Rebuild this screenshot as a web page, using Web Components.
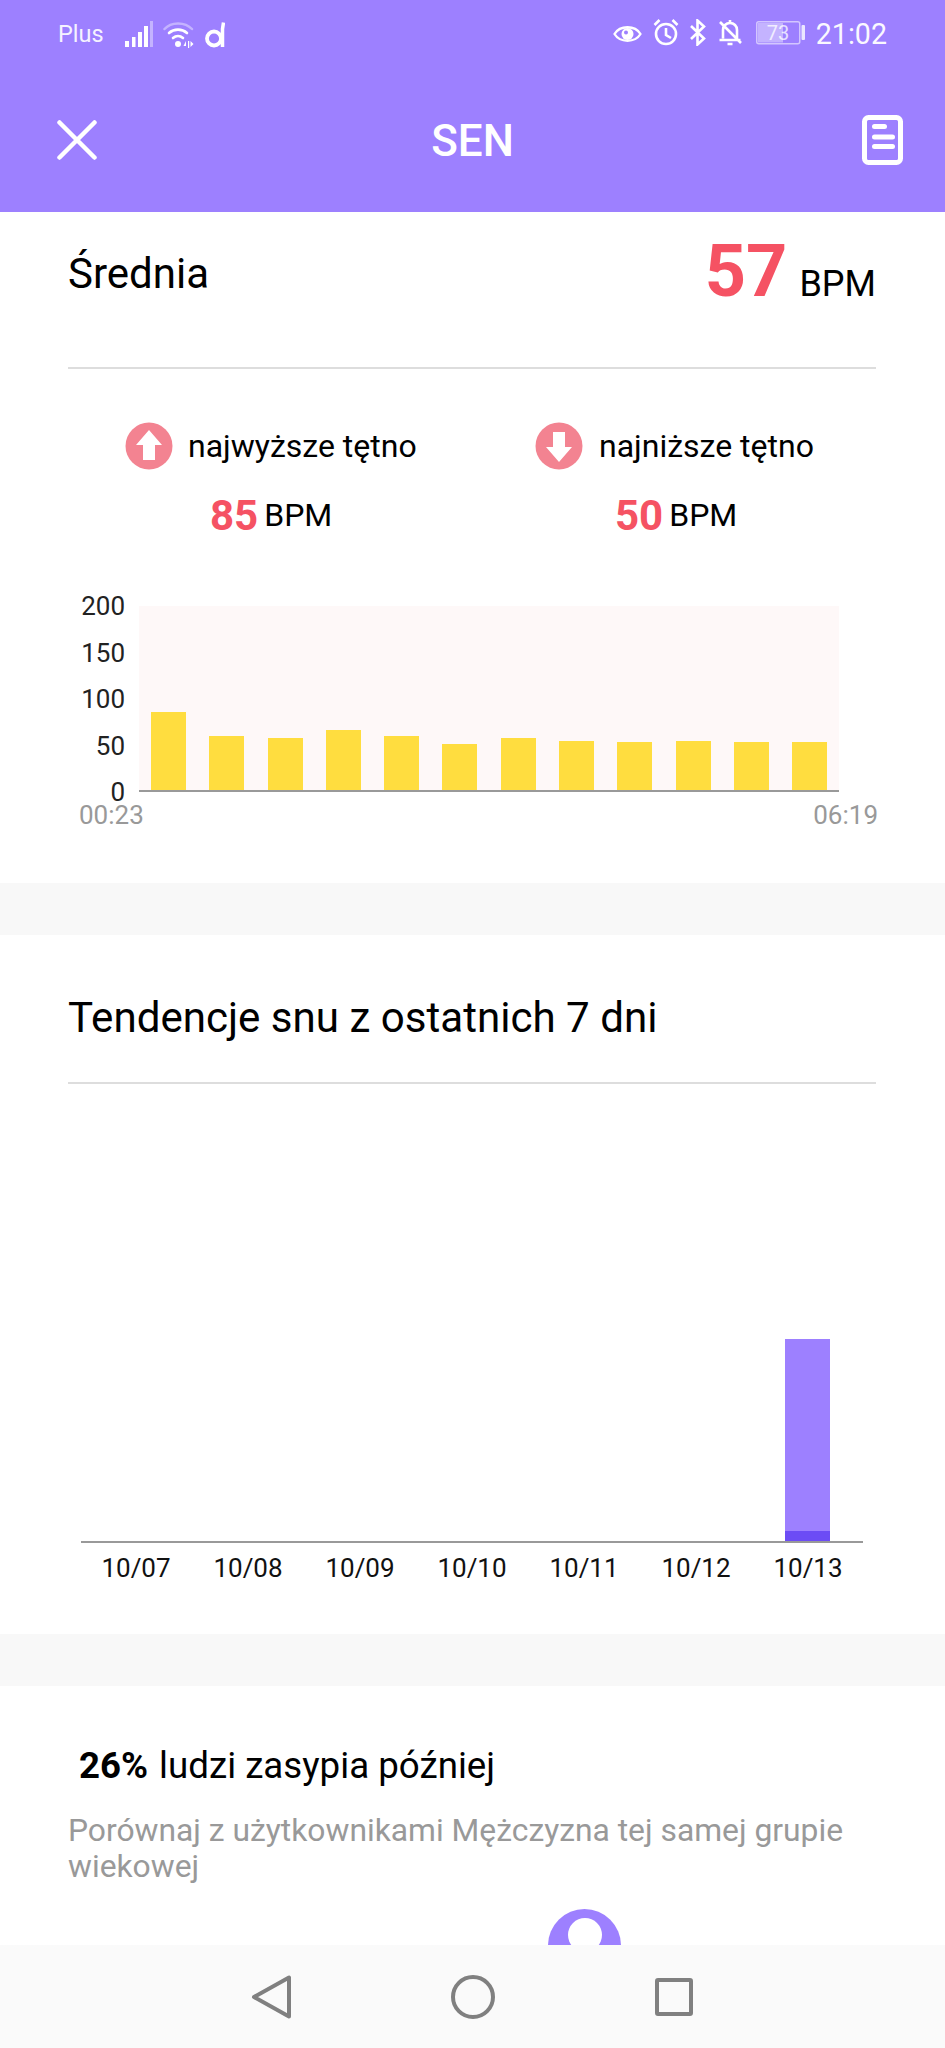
<!DOCTYPE html>
<html>
<head>
<meta charset="utf-8">
<title>SEN</title>
<style>
html, body { margin: 0; padding: 0; }
body { width: 945px; height: 2048px; overflow: hidden; background: #fff; font-family: Roboto, "Liberation Sans", sans-serif; color: #000; display: flex; flex-direction: column; }
main { flex: 1; min-height: 0; overflow: hidden; }
</style>
</head>
<body>
<sleep-header></sleep-header>
<main>
  <heart-card></heart-card>
  <trend-card></trend-card>
  <rank-card></rank-card>
</main>
<nav-bar></nav-bar>

<script>
function shadow(el, html) {
  el.attachShadow({ mode: "open" }).innerHTML = html;
}

class SleepHeader extends HTMLElement {
  connectedCallback() {
    shadow(this, `
<style>
:host { display: block; height: 212px; background: #9d80ff; color: #fff; flex: none; }
.status { display: flex; align-items: center; height: 68px; padding: 0 58px; box-sizing: border-box; }
.plus { font-size: 23.5px; opacity: .9; margin-right: 21px; }
.left { display: flex; align-items: center; gap: 10.5px; }
.right { margin-left: auto; display: flex; align-items: center; gap: 10.5px; }
.time { font-size: 28.6px; opacity: .95; }
svg { display: block; }
.bar { display: grid; grid-template-columns: 1fr auto 1fr; align-items: center; height: 144px; padding: 0 42px; box-sizing: border-box; }
.bar svg:first-child { margin-left: 15px; }
.bar svg:last-child { justify-self: end; }
h1 { margin: 0; padding-top: 2px; font-size: 44px; font-weight: 500; line-height: 1; }
</style>
<div class="status">
  <span class="plus">Plus</span>
  <div class="left">
    <svg width="28" height="27" viewBox="0 0 28 27"><g fill="#fff"><rect x="0" y="20" width="4" height="6"/><rect x="7" y="16" width="3.5" height="10"/><rect x="13" y="11" width="4" height="15"/><rect x="19" y="5" width="4" height="21"/></g><rect x="25" y="0" width="3" height="26" fill="#fff" opacity=".4"/></svg>
    <svg width="31" height="27" viewBox="0 0 31 27" fill="none" stroke="#fff" stroke-linecap="round"><path d="M1.5 8C8 0.5 22 0.5 29 8" stroke-width="2.5" opacity=".4"/><path d="M6 12C11 7.500 19 7.500 24 12" stroke-width="2.600"/><path d="M10 17C13 14.500 17 14.500 20 17" stroke-width="2.600"/><circle cx="15" cy="23" r="3" fill="#fff" stroke="none"/><path d="M23 20l-2.500 5h2.500zM25 20v7h1.200v-7zM27.500 20v6l3-3z" fill="#fff" stroke="none"/></svg>
    <svg width="20" height="27" viewBox="0 0 20 27" fill="none" stroke="#fff" style="margin-left:.5px"><circle cx="9" cy="17.500" r="7" stroke-width="3.800"/><path d="M17.500 26V8L18.500 1.500" stroke-width="3.500"/></svg>
  </div>
  <div class="right">
    <svg width="29" height="20" viewBox="0 0 29 20" fill="none" stroke="#fff"><path d="M1.500 10C7 1 22 1 27.500 10C22 19 7 19 1.500 10Z" stroke-width="2.300"/><circle cx="14.500" cy="10" r="6" fill="#fff" stroke="none"/><circle cx="13" cy="8.500" r="2" fill="#9d80ff" stroke="none"/></svg>
    <svg width="26" height="27" viewBox="0 0 26 27" fill="none" stroke="#fff" stroke-width="2.600" style="margin-top:-4px"><circle cx="13" cy="15" r="10"/><path d="M13 9v7l5 3M1.500 6l5-5M24.500 6l-5-5"/></svg>
    <svg width="18" height="27" viewBox="0 0 18 27" fill="none" stroke="#fff" stroke-width="2.600" style="margin-top:-3px"><path d="M2 7l13 12.500-6.500 6V1.500l6.500 6L2 20"/></svg>
    <svg width="24" height="27" viewBox="0 0 24 27" fill="none" stroke="#fff" stroke-width="2.600" style="margin-top:-3px"><path d="M5 19.500V11C5 7 8 4 12 4s7 3 7 7l0 8.500M1.500 21h21M9.500 25h5M12 1v3M2 3l21 21"/></svg>
    <svg width="49" height="24" viewBox="0 0 49 24" style="margin:-3px 0 0 4px"><rect x=".75" y=".75" width="43" height="22" rx="2" fill="none" stroke="#fff" stroke-width="1.500" opacity=".55"/><rect x="2" y="2" width="25" height="19.500" fill="#fff" opacity=".4"/><rect x="45.500" y="4" width="3.500" height="15" rx="1" fill="#fff" opacity=".8"/><text x="22" y="19" font-size="20" text-anchor="middle" fill="#fff" opacity=".75" font-family="Roboto">73</text></svg>
    <span class="time">21:02</span>
  </div>
</div>
<div class="bar">
  <svg width="40" height="40" viewBox="0 0 40 40"><path d="M2.500 2.500L37.500 37.500M37.500 2.500L2.500 37.500" stroke="#fff" stroke-width="4.500" stroke-linecap="round"/></svg>
  <h1>SEN</h1>
  <svg width="41" height="50" viewBox="0 0 41 50" fill="none"><rect x="2.500" y="2.500" width="36" height="45" rx="4" stroke="#fff" stroke-width="5"/><path d="M12.500 11.500h10M12.500 22h18M12.500 31.500h18" stroke="#fff" stroke-width="5" stroke-linecap="round"/></svg>
</div>`);
  }
}

class HeartCard extends HTMLElement {
  connectedCallback() {
    const values = [85, 59, 57, 65, 59, 50, 57, 53, 52, 53, 52, 52];
    shadow(this, `
<style>
:host { display: block; background: #fff; height: 723px; box-sizing: border-box; padding: 0 69px 0 68px; border-bottom: 52px solid #f8f8f8; }
.top { display: flex; justify-content: space-between; align-items: flex-start; height: 157px; box-sizing: border-box; border-bottom: 2px solid #ddd; }
.label { font-size: 42px; line-height: 50px; margin-top: 37px; }
.avg { margin-top: 24px; }
.big { font-size: 72px; font-weight: 700; color: #f55263; line-height: 1; }
.unit { font-size: 36px; margin-left: 12px; }
.minmax { display: grid; grid-template-columns: 410px 1fr; padding: 53px 0 0 57px; }
.head { display: flex; align-items: center; gap: 16px; font-size: 32px; height: 48px; }
.a .head { gap: 15px; }
.val { font-size: 32px; display: flex; align-items: center; gap: 6px; margin-top: 21px; height: 48px; }
.val b { font-size: 42px; font-weight: 700; color: #f55263; }
.a .val { padding-left: 85px; }
.b .val { padding-left: 80px; }
.chart { display: grid; grid-template-columns: 57px 700px; grid-template-rows: 186px auto; column-gap: 14px; margin-top: 67px; font-size: 26px; color: #222; }
.yaxis { display: flex; flex-direction: column; justify-content: space-between; align-items: flex-end; margin: -11px 0; line-height: 22px; }
.plot { background: #fef8f8; border-bottom: 2px solid #999; display: flex; align-items: flex-end; gap: 23.3px; padding-left: 12px; box-sizing: border-box; }
.plot i { display: block; width: 35px; background: #ffdd3f; }
.times { grid-column: 1 / 3; display: flex; justify-content: space-between; color: #999; margin: 12px -39px 0 11px; line-height: 22px; }
</style>
<div class="top"><span class="label">Średnia</span><span class="avg"><span class="big">57</span><span class="unit">BPM</span></span></div>
<div class="minmax">
  <div class="a">
    <div class="head"><svg width="48" height="48" viewBox="0 0 48 48"><circle cx="24" cy="24" r="23.500" fill="#f38391"/><path d="M24 8L37 23H30V38H18V23H11Z" fill="#fff"/></svg>najwyższe tętno</div>
    <div class="val"><b>85</b>BPM</div>
  </div>
  <div class="b">
    <div class="head"><svg width="48" height="48" viewBox="0 0 48 48"><circle cx="24" cy="24" r="23.500" fill="#f38391"/><path d="M24 40L37 25H30V10H18V25H11Z" fill="#fff"/></svg>najniższe tętno</div>
    <div class="val"><b>50</b>BPM</div>
  </div>
</div>
<div class="chart">
  <div class="yaxis"><span>200</span><span>150</span><span>100</span><span>50</span><span>0</span></div>
  <div class="plot">${values.map(v => `<i style="height:${Math.round(v * 0.92)}px"></i>`).join("")}</div>
  <div class="times"><span>00:23</span><span>06:19</span></div>
</div>`);
  }
}

class TrendCard extends HTMLElement {
  connectedCallback() {
    const days = ["10/07", "10/08", "10/09", "10/10", "10/11", "10/12", "10/13"];
    shadow(this, `
<style>
:host { display: block; background: #fff; height: 751px; box-sizing: border-box; padding: 0 69px 0 68px; border-bottom: 52px solid #f8f8f8; }
.title { font-size: 42.1px; height: 149px; box-sizing: border-box; padding-top: 58px; border-bottom: 2px solid #ddd; line-height: 50px; }
.plot { height: 459px; margin: 0 13px 0 13px; border-bottom: 2px solid #999; display: flex; align-items: flex-end; justify-content: flex-end; padding-right: 33px; box-sizing: border-box; }
.bar { width: 45px; height: 202px; background: #9d80ff; display: flex; align-items: flex-end; }
.bar i { display: block; width: 100%; height: 10px; background: #6c4cf5; }
.days { display: flex; margin: 8px 0 0 12px; font-size: 26px; line-height: 34px; color: #111; }
.days span { width: 112px; text-align: center; }
</style>
<div class="title">Tendencje snu z ostatnich 7 dni</div>
<div class="plot"><div class="bar"><i></i></div></div>
<div class="days">${days.map(d => `<span>${d}</span>`).join("")}</div>`);
  }
}

class RankCard extends HTMLElement {
  connectedCallback() {
    shadow(this, `
<style>
:host { display: block; background: #fff; box-sizing: border-box; padding: 56px 69px 0 68px; height: 300px; overflow: hidden; }
.head { font-size: 36.7px; padding-left: 11px; line-height: 48px; }
.head b { font-size: 36.6px; font-weight: 700; margin-right: 2px; }
p { margin: 22px 0 0; font-size: 31.8px; line-height: 36px; color: #999; }
.avatar { width: 73px; height: 73px; border-radius: 50%; background: #9d80ff; margin: 25px 0 0 480px; overflow: hidden; }
.avatar i { display: block; width: 34px; height: 34px; border-radius: 50%; background: #fff; margin: 9px auto 0; }
</style>
<div class="head"><b>26%</b> ludzi zasypia później</div>
<p>Porównaj z użytkownikami Mężczyzna tej samej grupie wiekowej</p>
<div class="avatar"><i></i></div>`);
  }
}

class NavBar extends HTMLElement {
  connectedCallback() {
    shadow(this, `
<style>
:host { display: flex; flex: none; height: 103px; box-sizing: border-box; padding-right: 2px; background: #fafafa; align-items: center; justify-content: center; gap: 156.5px; }
svg { display: block; }
svg:last-child { margin-left: 3px; }
</style>
<svg width="44" height="46" viewBox="0 0 44 46" fill="none" stroke="#808080" stroke-width="4" stroke-linejoin="round"><path d="M38 3.500V42.500L3 23Z"/></svg>
<svg width="44" height="44" viewBox="0 0 44 44" fill="none" stroke="#808080" stroke-width="4"><circle cx="22" cy="22" r="20"/></svg>
<svg width="38" height="38" viewBox="0 0 38 38" fill="none" stroke="#808080" stroke-width="4" stroke-linejoin="round"><rect x="2" y="2" width="34" height="34" rx="1"/></svg>`);
  }
}

customElements.define("sleep-header", SleepHeader);
customElements.define("heart-card", HeartCard);
customElements.define("trend-card", TrendCard);
customElements.define("rank-card", RankCard);
customElements.define("nav-bar", NavBar);
</script>
</body>
</html>
